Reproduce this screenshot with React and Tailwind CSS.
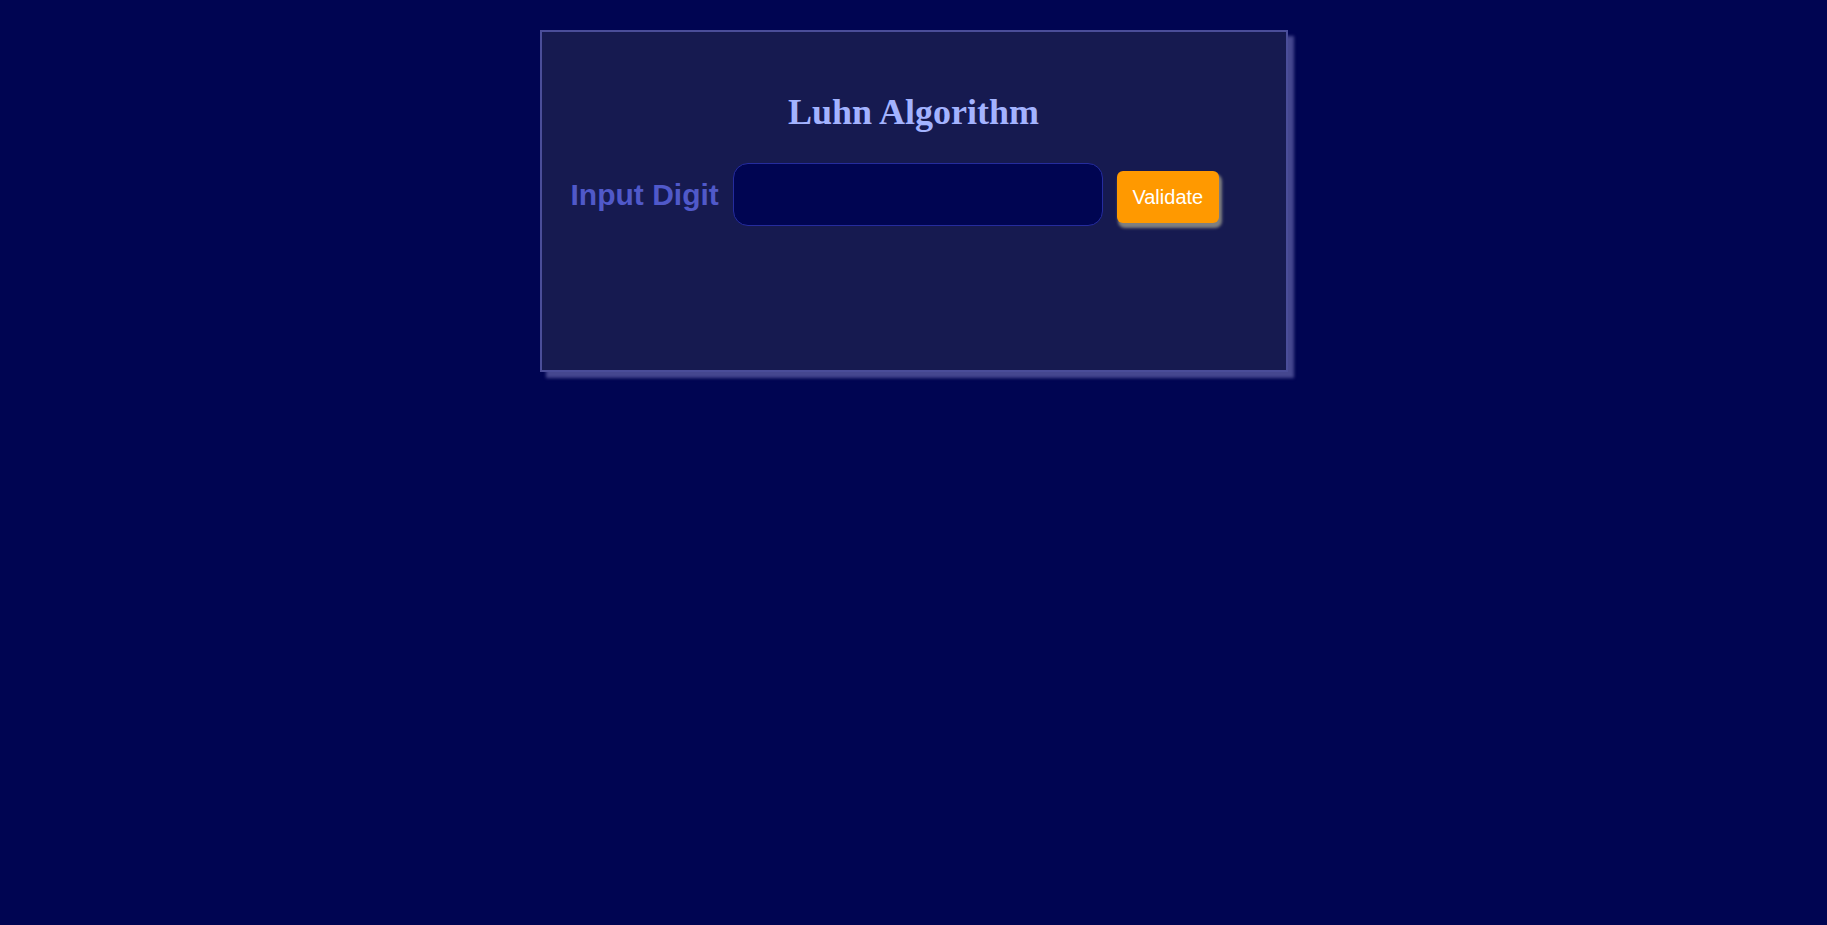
import { useState } from 'react';

const App = () => {
  const [digits, setDigits] = useState('');

  return (
    <div className="min-h-screen w-full bg-[#000552] pt-[30px]">
      <div className="mx-auto w-[748px] h-[342px] border-2 border-[#4a4d99] bg-[#161a50] shadow-[6px_6px_3px_#45478f]">
        <h1 className="pt-[53px] text-center text-[36px] font-bold text-[#a3b3ff] font-['Liberation_Serif',serif]">
          Luhn Algorithm
        </h1>

        <div className="mt-[24px] pl-[29px] flex items-center font-['Liberation_Sans',Arial,sans-serif]">
          <label className="text-[30px] font-bold text-[#5059c9]">Input Digit</label>
          <input
            type="text"
            value={digits}
            onChange={(e) => setDigits(e.target.value)}
            className="ml-[14px] w-[370px] h-[63px] rounded-[15px] border border-[#252c9e] bg-[#000552] px-4 text-white text-xl focus:outline-none"
          />
          <button className="ml-[14px] mt-[5px] w-[102px] h-[52px] rounded-[6px] bg-[#ff9900] text-white text-[20px] shadow-[2px_4px_3px_1px_#808080]">
            Validate
          </button>
        </div>
      </div>
    </div>
  );
};

export default App;
